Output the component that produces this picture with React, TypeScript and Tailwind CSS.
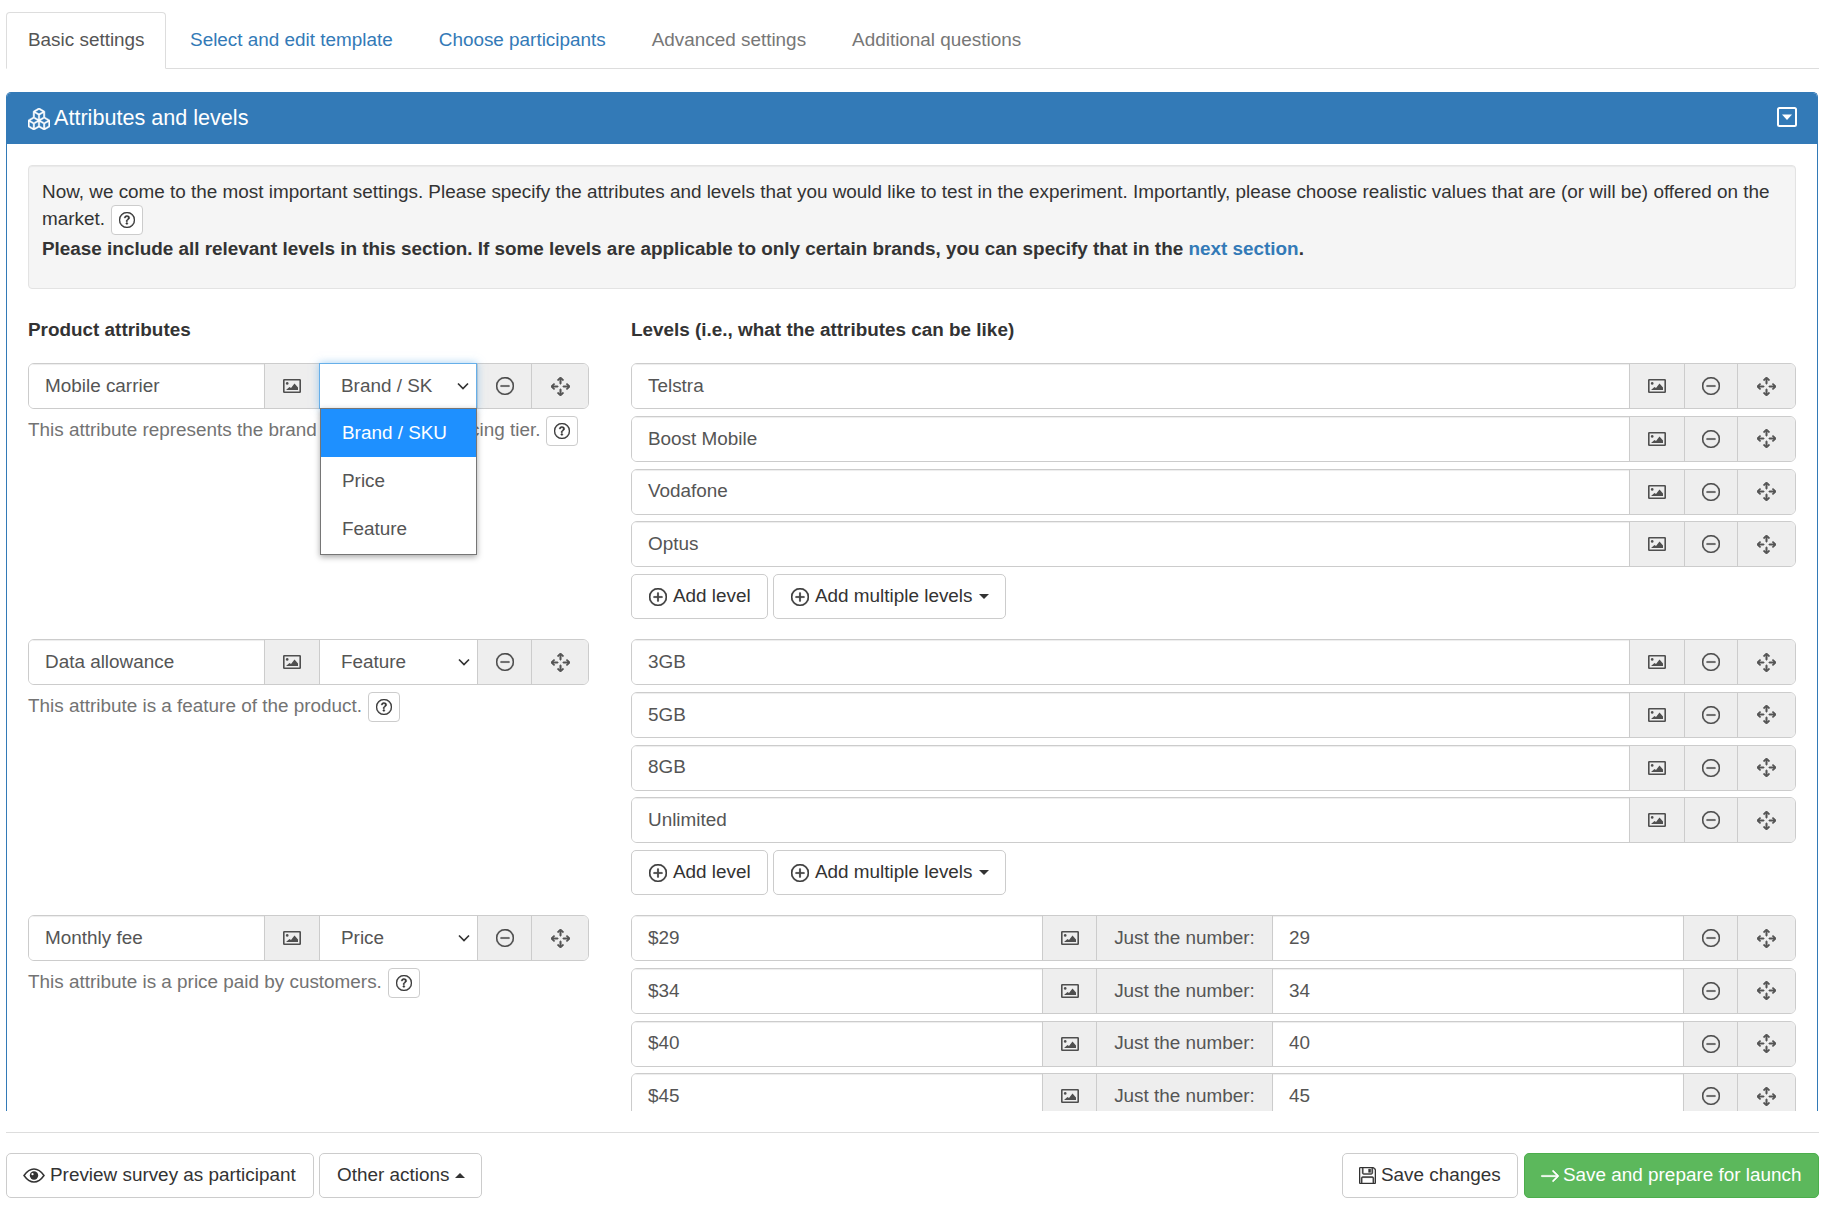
import React from "react";
import {
  BsBoxes, BsDashCircle, BsArrowsMove, BsPlusCircle, BsQuestionCircle,
  BsFloppy, BsArrowRight,
} from "react-icons/bs";

const cell = "flex items-center justify-center bg-[#eeeeee] border-l border-[#cccccc] text-[#555555] shrink-0";
const input = "flex items-center bg-white px-[16px] text-[#555555] shadow-[inset_0_1px_1px_rgba(0,0,0,0.075)] min-w-0";
const rowBox = "flex h-[46px] rounded-[6px] border border-[#cccccc] overflow-hidden";
const btn = "flex items-center h-[45px] rounded-[5px] border border-[#cccccc] bg-white text-[#333333]";

function ImageIcon() {
  return (
    <svg viewBox="0 0 18 14" className="w-[18px] h-[14px]" fill="none">
      <rect x="0.8" y="0.8" width="16.4" height="12.4" rx="0.5" stroke="#4f4f4f" strokeWidth="1.6" />
      <circle cx="4.2" cy="4.4" r="1.3" fill="#4f4f4f" />
      <path d="M3 11 L6.5 8 L8 9 L11.5 4.5 L15 8.5 L15 11 Z" fill="#4f4f4f" />
    </svg>
  );
}

function DashIcon() {
  return <BsDashCircle className="w-[18px] h-[18px] text-[#444444]" stroke="currentColor" strokeWidth="0.45" />;
}

function MoveIcon() {
  return <BsArrowsMove className="w-[19px] h-[19px] text-[#555555]" stroke="currentColor" strokeWidth="0.7" />;
}

function PlusIcon() {
  return <BsPlusCircle className="w-[18px] h-[18px] mr-[6px] text-[#333333]" stroke="currentColor" strokeWidth="0.55" />;
}

function EyeIcon() {
  return (
    <svg viewBox="0 0 22 15" className="w-[22px] h-[15px] mr-[5px]" fill="none">
      <path d="M1 7.5 C4.5 2.5 8 1 11 1 C14 1 17.5 2.5 21 7.5 C17.5 12.5 14 14 11 14 C8 14 4.5 12.5 1 7.5 Z" stroke="#333333" strokeWidth="1.5" />
      <circle cx="11" cy="7.5" r="4.2" fill="#333333" />
      <circle cx="9.5" cy="6.2" r="1.1" fill="#ffffff" />
    </svg>
  );
}

function Help() {
  return (
    <span className="inline-flex items-center justify-center align-middle w-[32px] h-[30px] rounded-[4px] border border-[#cccccc] bg-white text-[#333333] ml-[6px]">
      <BsQuestionCircle className="w-[16px] h-[16px]" stroke="currentColor" strokeWidth="0.4" />
    </span>
  );
}

function Chevron() {
  return (
    <svg viewBox="0 0 12 8" className="w-[12px] h-[8px] shrink-0 ml-auto" fill="none" stroke="#333333" strokeWidth="1.7">
      <path d="M1 1.5 L6 6.5 L11 1.5" />
    </svg>
  );
}

function AttributeRow({ name, type, open }: { name: string; type: string; open?: boolean }) {
  return (
    <div className="relative flex h-[46px]">
      <div className={`${rowBox} w-full`}>
        <div className={`${input} flex-1`}>{name}</div>
        <div className={`${cell} w-[55px]`}><ImageIcon /></div>
        <div className="flex items-center w-[158px] shrink-0 bg-white pl-[21px] pr-[7px] text-[#555555] border-l border-[#cccccc]">
          {!open && type}
          {!open && <Chevron />}
        </div>
        <div className={`${cell} w-[54px]`}><DashIcon /></div>
        <div className={`${cell} w-[57px]`}><MoveIcon /></div>
      </div>
      {open && (
        <div className="absolute left-[291px] top-0 w-[158px] h-[46px] z-10 flex items-center bg-white pl-[21px] pr-[7px] text-[#555555] border border-[#66afe9] shadow-[0_0_8px_rgba(102,175,233,0.6)]">
          {type}
          <Chevron />
          <div className="absolute left-0 top-[44px] w-[157px] pb-[1px] border border-[#767676] bg-white shadow-[0_2px_6px_rgba(0,0,0,0.35)]">
            <div className="flex items-center h-[48px] pl-[21px] bg-[#1e90ff] text-white">Brand / SKU</div>
            <div className="flex items-center h-[48px] pl-[21px] text-[#555555]">Price</div>
            <div className="flex items-center h-[48px] pl-[21px] text-[#555555]">Feature</div>
          </div>
        </div>
      )}
    </div>
  );
}

function LevelRow({ label }: { label: string }) {
  return (
    <div className={rowBox}>
      <div className={`${input} flex-1`}>{label}</div>
      <div className={`${cell} w-[55px]`}><ImageIcon /></div>
      <div className={`${cell} w-[53px]`}><DashIcon /></div>
      <div className={`${cell} w-[58px]`}><MoveIcon /></div>
    </div>
  );
}

function PriceRow({ label, num }: { label: string; num: string }) {
  return (
    <div className={rowBox}>
      <div className={`${input} w-[410px] shrink-0`}>{label}</div>
      <div className={`${cell} w-[54px]`}><ImageIcon /></div>
      <div className={`${cell} w-[176px]`}>Just the number:</div>
      <div className={`${input} flex-1 border-l border-[#cccccc]`}>{num}</div>
      <div className={`${cell} w-[54px]`}><DashIcon /></div>
      <div className={`${cell} w-[58px]`}><MoveIcon /></div>
    </div>
  );
}

function AddButtons() {
  return (
    <div className="flex gap-[5px] mb-[20px]">
      <div className={`${btn} w-[137px] pl-[17px]`}>
        <PlusIcon />Add level
      </div>
      <div className={`${btn} w-[233px] pl-[17px]`}>
        <PlusIcon />Add multiple levels
        <span className="ml-[6px] w-0 h-0 border-x-[5px] border-x-transparent border-t-[5px] border-t-[#333333]" />
      </div>
    </div>
  );
}

function Group({ name, type, open, help, rows }: { name: string; type: string; open?: boolean; help: React.ReactNode; rows: React.ReactNode }) {
  return (
    <div className="grid grid-cols-[561px_1fr] gap-x-[42px]">
      <div>
        <AttributeRow name={name} type={type} open={open} />
        <div className="mt-[7px] text-[#737373] leading-[27px] whitespace-nowrap">{help}</div>
      </div>
      <div className="flex flex-col">{rows}</div>
    </div>
  );
}

export default function App() {
  return (
    <div className="w-[1827px] h-[1207px] overflow-hidden pl-[6px] pr-[8px] bg-white font-['Liberation_Sans',Arial,sans-serif] text-[18.9px] text-[#333333]">
      <div className="flex pt-[12px] border-b border-[#dddddd]">
        <div className="flex items-center h-[57px] -mb-px pl-[21px] pr-[20.5px] mr-[2px] rounded-t-[4px] border border-[#dddddd] border-b-white bg-white text-[#555555]">Basic settings</div>
        <div className="flex items-center h-[57px] -mb-px px-[21px] mr-[2px] border border-transparent text-[#337ab7]">Select and edit template</div>
        <div className="flex items-center h-[57px] -mb-px px-[21px] mr-[2px] border border-transparent text-[#337ab7]">Choose participants</div>
        <div className="flex items-center h-[57px] -mb-px px-[21px] mr-[2px] border border-transparent text-[#777777]">Advanced settings</div>
        <div className="flex items-center h-[57px] -mb-px px-[21px] border border-transparent text-[#777777]">Additional questions</div>
      </div>

      <div className="mt-[23px] mr-[1px] h-[1019px] overflow-hidden rounded-t-[5px] border-x border-t border-[#337ab7]">
        <div className="flex items-center h-[51px] bg-[#337ab7] text-white pl-[21px] pr-[20px]">
          <BsBoxes className="w-[22px] h-[22px] mr-[4px]" stroke="currentColor" strokeWidth="0.35" />
          <span className="text-[21.6px]">Attributes and levels</span>
          <svg viewBox="0 0 20 20" className="w-[20px] h-[20px] ml-auto mb-[3px]" fill="none">
            <rect x="1" y="1" width="18" height="18" rx="1.5" stroke="#ffffff" strokeWidth="2" />
            <path d="M5 7.5 L15 7.5 L10 13 Z" fill="#ffffff" />
          </svg>
        </div>
        <div className="pl-[21px] pr-[21px] pt-[21px]">
          <div className="h-[124px] rounded-[4px] border border-[#e3e3e3] bg-[#f5f5f5] pl-[13px] pr-[12px] pt-[12px] leading-[27px] shadow-[inset_0_1px_1px_rgba(0,0,0,0.05)]">
            <div>
              Now, we come to the most important settings. Please specify the attributes and levels that you would like to test in the experiment. Importantly, please choose realistic values that are (or will be) offered on the market.
              <Help />
            </div>
            <div className="font-bold">
              Please include all relevant levels in this section. If some levels are applicable to only certain brands, you can specify that in the <span className="text-[#337ab7]">next section</span>.
            </div>
          </div>

          <div className="grid grid-cols-[561px_1fr] gap-x-[42px] mt-[27px] mb-[20px] font-bold leading-[27px]">
            <div>Product attributes</div>
            <div>Levels (i.e., what the attributes can be like)</div>
          </div>

          <Group
            name="Mobile carrier"
            type="Brand / SK"
            open
            help={<>This attribute represents the brand or SKU and its pricing tier.<Help /></>}
            rows={
              <>
                {["Telstra", "Boost Mobile", "Vodafone", "Optus"].map((l) => (
                  <div key={l} className="mb-[6.75px]"><LevelRow label={l} /></div>
                ))}
                <AddButtons />
              </>
            }
          />
          <Group
            name="Data allowance"
            type="Feature"
            help={<>This attribute is a feature of the product.<Help /></>}
            rows={
              <>
                {["3GB", "5GB", "8GB", "Unlimited"].map((l) => (
                  <div key={l} className="mb-[6.75px]"><LevelRow label={l} /></div>
                ))}
                <AddButtons />
              </>
            }
          />
          <Group
            name="Monthly fee"
            type="Price"
            help={<>This attribute is a price paid by customers.<Help /></>}
            rows={
              <>
                {[["$29", "29"], ["$34", "34"], ["$40", "40"], ["$45", "45"]].map(([l, n]) => (
                  <div key={l} className="mb-[6.75px]"><PriceRow label={l} num={n} /></div>
                ))}
              </>
            }
          />
        </div>
      </div>

      <div className="mt-[21px] pt-[20px] border-t border-[#dddddd] flex">
        <div className={`${btn} w-[308px] pl-[16px]`}>
          <EyeIcon />Preview survey as participant
        </div>
        <div className={`${btn} w-[163px] ml-[5px] pl-[17px]`}>
          Other actions
          <span className="ml-[6px] w-0 h-0 border-x-[5px] border-x-transparent border-b-[5px] border-b-[#333333]" />
        </div>
        <div className={`${btn} w-[176px] ml-auto pl-[16px]`}>
          <BsFloppy className="w-[17px] h-[17px] mr-[5px]" stroke="currentColor" strokeWidth="0.4" />Save changes
        </div>
        <div className="flex items-center h-[45px] w-[295px] ml-[6px] pl-[15px] rounded-[5px] border border-[#4cae4c] bg-[#5cb85c] text-white">
          <BsArrowRight className="w-[20px] h-[20px] mr-[3px]" stroke="currentColor" strokeWidth="0.5" />Save and prepare for launch
        </div>
      </div>
    </div>
  );
}
